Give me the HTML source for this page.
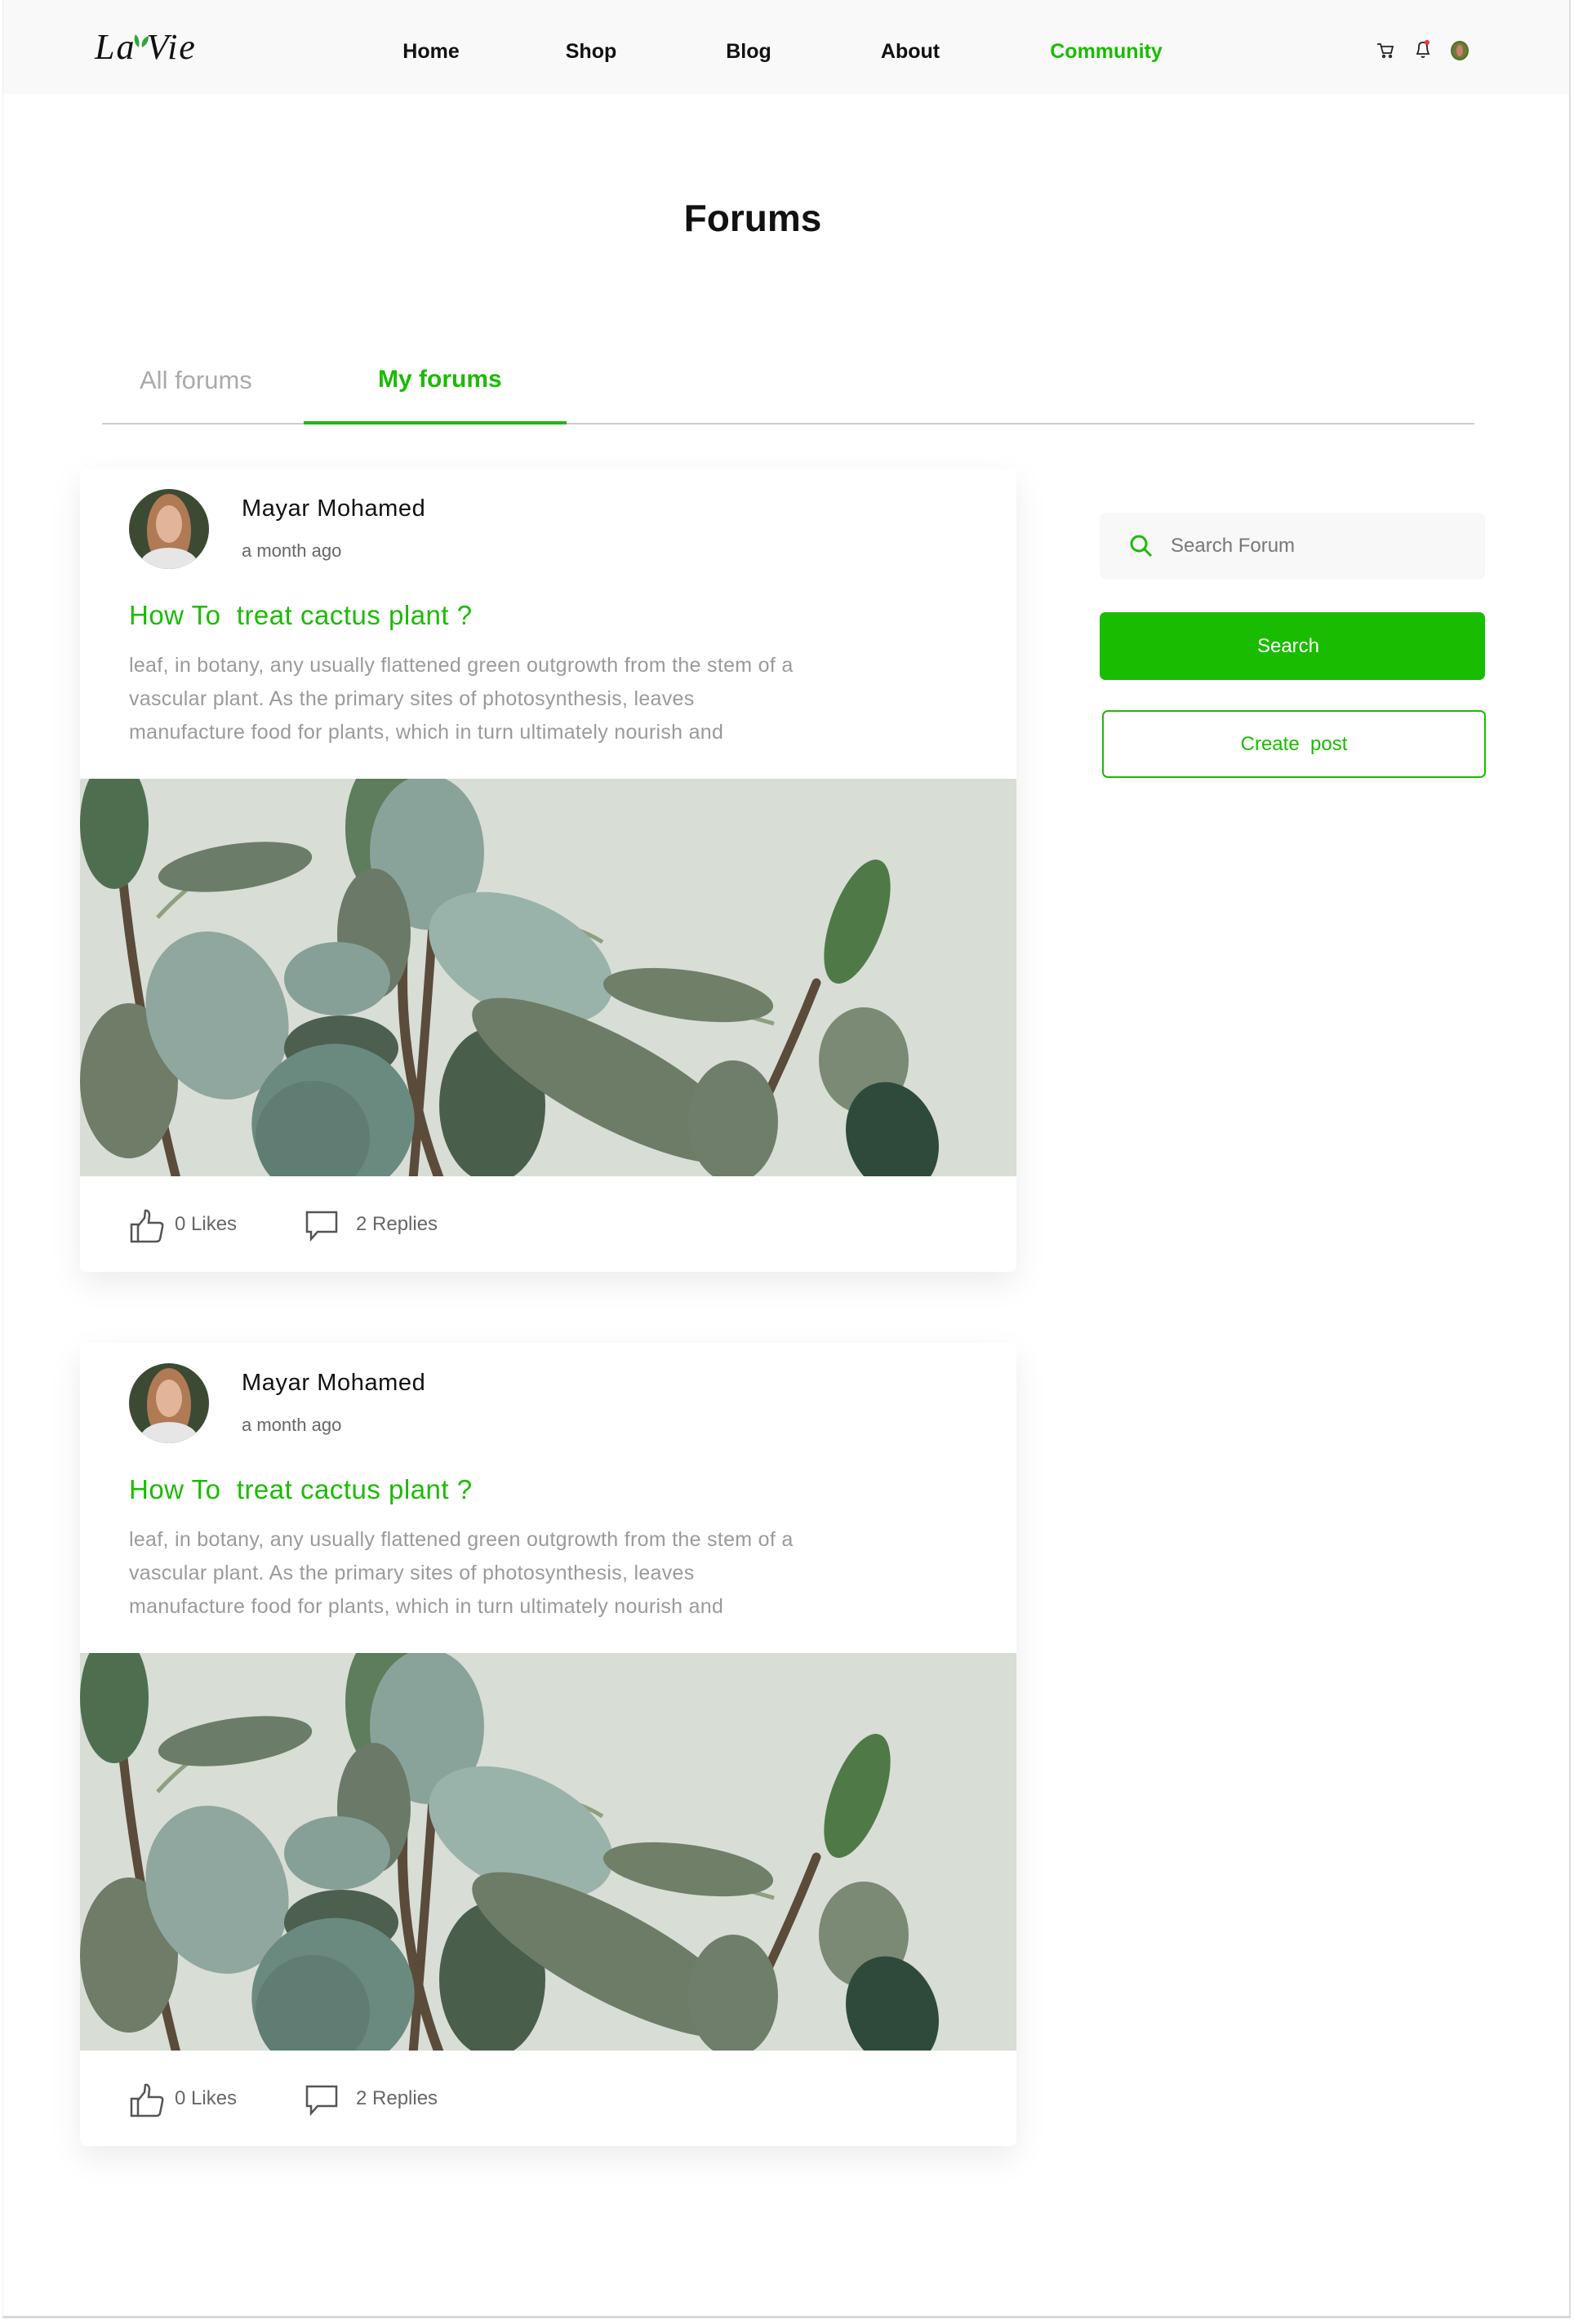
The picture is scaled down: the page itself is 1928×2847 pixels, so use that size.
<!DOCTYPE html>
<html><head><meta charset="utf-8">
<style>
*{margin:0;padding:0;box-sizing:border-box}
body{width:1928px;height:2847px;background:#fff;font-family:"Liberation Sans",sans-serif;position:relative;overflow:hidden}
.frame{position:absolute;left:3px;top:0;width:1921px;height:2840px;border-right:2px solid #ddd;border-bottom:3px solid #d8d8d8;border-left:1px solid #eee}
.hdr{position:absolute;left:4px;top:0;width:1918px;height:115px;background:#f9f9f9}
.nav{position:absolute;top:49px;font-size:25px;font-weight:bold;color:#111;transform:translateX(-50%)}
.abs{position:absolute}
.card{position:absolute;left:98px;width:1147px;height:984px;background:#fff;border-radius:8px;box-shadow:0 14px 40px rgba(0,0,0,0.08);overflow:hidden}
.av{position:absolute;left:60px;top:25px;width:98px;height:98px;border-radius:50%;overflow:hidden;background:#3c4a33}
.name{position:absolute;left:198px;top:33px;font-size:29px;letter-spacing:0.6px;color:#111}
.ago{position:absolute;left:198px;top:88px;font-size:22px;color:#666}
.title{position:absolute;left:60px;top:161px;font-size:33px;letter-spacing:0.5px;color:#1abc00}
.body{position:absolute;left:60px;top:221px;font-size:25px;letter-spacing:0.3px;line-height:41px;color:#9a9a9a;white-space:nowrap}
.img{position:absolute;left:0;top:380px;width:1147px;height:487px}
.ft{position:absolute;top:912px;font-size:24px;color:#666}
</style></head><body>
<div class="frame"></div>
<div class="hdr"></div>
<div class="abs" style="left:116px;top:32px;font-family:'Liberation Serif',serif;font-style:italic;font-size:44px;color:#111;letter-spacing:2px">La&nbsp;Vie</div>
<svg class="abs" style="left:160px;top:38px" width="30" height="30"><path d="M6 4 Q2 14 10 20 Q12 10 6 4Z" fill="#2fa53a"/><path d="M22 6 Q12 10 14 20 Q22 16 22 6Z" fill="#2fa53a"/></svg>
<div class="nav" style="left:528px">Home</div>
<div class="nav" style="left:724px">Shop</div>
<div class="nav" style="left:917px">Blog</div>
<div class="nav" style="left:1115px">About</div>
<div class="nav" style="left:1355px;color:#1abc00">Community</div>
<svg class="abs" style="left:1686px;top:51px" width="22" height="22" fill="none" stroke="#222" stroke-width="1.8"><path d="M1 3h4l3 11h10l2-8H6"/><circle cx="9" cy="18" r="1.3"/><circle cx="17" cy="18" r="1.3"/></svg>
<svg class="abs" style="left:1732px;top:48px" width="22" height="26" fill="none" stroke="#222" stroke-width="1.8"><path d="M4 18 Q6 14 6 9 Q6 4 11 4 Q16 4 16 9 Q16 14 18 18Z"/><path d="M9 21 Q11 23 13 21"/><circle cx="16" cy="4" r="3" fill="#e33" stroke="none"/></svg>
<div class="abs" style="left:1777px;top:50px;width:22px;height:24px;border-radius:50%;background:#6b7b3c;border:2px solid #5a6a2a"><div style="margin:3px auto;width:8px;height:14px;border-radius:50%;background:#c9806a"></div></div>

<div class="abs" style="left:0;width:1844px;top:240px;text-align:center;font-size:46px;font-weight:bold;color:#111">Forums</div>

<div class="abs" style="left:171px;top:448px;font-size:31px;color:#aaa">All forums</div>
<div class="abs" style="left:463px;top:448px;font-size:30px;color:#1abc00;font-weight:bold">My forums</div>
<div class="abs" style="left:125px;top:518px;width:1681px;height:2px;background:#ccc"></div>
<div class="abs" style="left:372px;top:516px;width:322px;height:4px;background:#1abc00"></div>

<svg width="0" height="0" style="position:absolute">
<defs>
<g id="plant">
<rect width="1147" height="487" fill="#d8ddd6"/>
<g stroke="#5b4b3a" stroke-width="11" fill="none" stroke-linecap="round">
<path d="M50 100 Q70 300 118 490"/><path d="M400 160 Q380 330 440 490" stroke-width="12"/><path d="M432 180 Q420 350 408 490"/><path d="M902 250 Q850 380 790 490"/>
</g>
<g stroke="#8ea07f" stroke-width="5" fill="none"><path d="M95 170 Q150 110 200 100"/><path d="M430 200 Q560 150 640 200"/><path d="M850 300 Q780 280 700 260"/></g>
<ellipse cx="42" cy="55" rx="42" ry="80" fill="#4f6e50"/>
<ellipse cx="370" cy="60" rx="45" ry="85" fill="#5d7d5c"/>
<ellipse cx="425" cy="90" rx="70" ry="95" fill="#8aa39a"/>
<ellipse cx="190" cy="108" rx="95" ry="28" fill="#6b7d68" transform="rotate(-8 190 108)"/>
<ellipse cx="360" cy="190" rx="45" ry="80" fill="#6b7a68"/>
<ellipse cx="60" cy="370" rx="60" ry="95" fill="#6e7c68"/>
<ellipse cx="168" cy="290" rx="85" ry="105" fill="#8fa79e" transform="rotate(-20 168 290)"/>
<ellipse cx="315" cy="245" rx="65" ry="45" fill="#86a097"/>
<ellipse cx="320" cy="330" rx="70" ry="40" fill="#4d5f4f"/>
<ellipse cx="540" cy="220" rx="120" ry="70" fill="#9ab3aa" transform="rotate(25 540 220)"/>
<ellipse cx="745" cy="265" rx="105" ry="30" fill="#6f7f68" transform="rotate(8 745 265)"/>
<ellipse cx="505" cy="400" rx="65" ry="95" fill="#4a5e4c"/>
<ellipse cx="650" cy="370" rx="190" ry="55" fill="#6d7c66" transform="rotate(28 650 370)"/>
<ellipse cx="952" cy="175" rx="32" ry="80" fill="#4f7a48" transform="rotate(20 952 175)"/>
<ellipse cx="960" cy="345" rx="55" ry="65" fill="#7a8a74"/>
<ellipse cx="995" cy="440" rx="55" ry="70" fill="#2f4a3b" transform="rotate(-20 995 440)"/>
<ellipse cx="800" cy="420" rx="55" ry="75" fill="#6f7e6a"/>
<ellipse cx="310" cy="420" rx="100" ry="95" fill="#6a8a80" transform="rotate(-15 310 420)"/>
<ellipse cx="285" cy="440" rx="70" ry="70" fill="#5f7d72"/>
</g>
</defs></svg>

<div class="card" style="top:574px">
<div class="av"><div style="position:absolute;left:22px;top:6px;width:54px;height:90px;border-radius:50%;background:#b07a55"></div><div style="position:absolute;left:33px;top:20px;width:32px;height:46px;border-radius:50%;background:#e2b49a"></div><div style="position:absolute;left:14px;top:72px;width:70px;height:40px;border-radius:50%;background:#e6e6e6"></div></div>
<div class="name">Mayar Mohamed</div>
<div class="ago">a month ago</div>
<div class="title">How To&nbsp; treat cactus plant ?</div>
<div class="body">leaf, in botany, any usually flattened green outgrowth from the stem of a<br>vascular plant. As the primary sites of photosynthesis, leaves<br>manufacture food for plants, which in turn ultimately nourish and</div>
<svg class="img" viewBox="0 0 1147 487"><use href="#plant"/></svg>
<svg class="abs" style="left:60px;top:906px" width="44" height="44" fill="none" stroke="#555" stroke-width="2.5"><path d="M3 20h8v21H3z"/><path d="M11 22 L19 12 L20 3 Q24 2 25 8 L24 18 H38 Q42 19 41 23 L38 38 Q37 41 33 41 H11"/></svg>
<div class="ft" style="left:116px">0 Likes</div>
<svg class="abs" style="left:274px;top:908px" width="44" height="40" fill="none" stroke="#555" stroke-width="2.5"><path d="M4 3h36v24H17l-8 9v-9H4z"/></svg>
<div class="ft" style="left:338px">2 Replies</div>
</div>

<div class="card" style="top:1645px">
<div class="av"><div style="position:absolute;left:22px;top:6px;width:54px;height:90px;border-radius:50%;background:#b07a55"></div><div style="position:absolute;left:33px;top:20px;width:32px;height:46px;border-radius:50%;background:#e2b49a"></div><div style="position:absolute;left:14px;top:72px;width:70px;height:40px;border-radius:50%;background:#e6e6e6"></div></div>
<div class="name">Mayar Mohamed</div>
<div class="ago">a month ago</div>
<div class="title">How To&nbsp; treat cactus plant ?</div>
<div class="body">leaf, in botany, any usually flattened green outgrowth from the stem of a<br>vascular plant. As the primary sites of photosynthesis, leaves<br>manufacture food for plants, which in turn ultimately nourish and</div>
<svg class="img" viewBox="0 0 1147 487"><use href="#plant"/></svg>
<svg class="abs" style="left:60px;top:906px" width="44" height="44" fill="none" stroke="#555" stroke-width="2.5"><path d="M3 20h8v21H3z"/><path d="M11 22 L19 12 L20 3 Q24 2 25 8 L24 18 H38 Q42 19 41 23 L38 38 Q37 41 33 41 H11"/></svg>
<div class="ft" style="left:116px">0 Likes</div>
<svg class="abs" style="left:274px;top:908px" width="44" height="40" fill="none" stroke="#555" stroke-width="2.5"><path d="M4 3h36v24H17l-8 9v-9H4z"/></svg>
<div class="ft" style="left:338px">2 Replies</div>
</div>

<div class="abs" style="left:1347px;top:628px;width:472px;height:82px;background:#f8f8f8;border-radius:8px"></div>
<svg class="abs" style="left:1382px;top:653px" width="32" height="32" fill="none" stroke="#1abc00" stroke-width="3"><circle cx="13" cy="13" r="9"/><path d="M20 20l8 8"/></svg>
<div class="abs" style="left:1434px;top:655px;font-size:24px;color:#777">Search Forum</div>
<div class="abs" style="left:1347px;top:750px;width:462px;height:83px;background:#1abc00;border-radius:7px;color:#fff;font-size:24px;text-align:center;line-height:83px;width:472px;text-indent:-10px">Search</div>
<div class="abs" style="left:1350px;top:870px;width:470px;height:83px;border:2px solid #1abc00;border-radius:7px;color:#1abc00;font-size:24px;text-align:center;line-height:79px">Create&nbsp; post</div>
</body></html>
